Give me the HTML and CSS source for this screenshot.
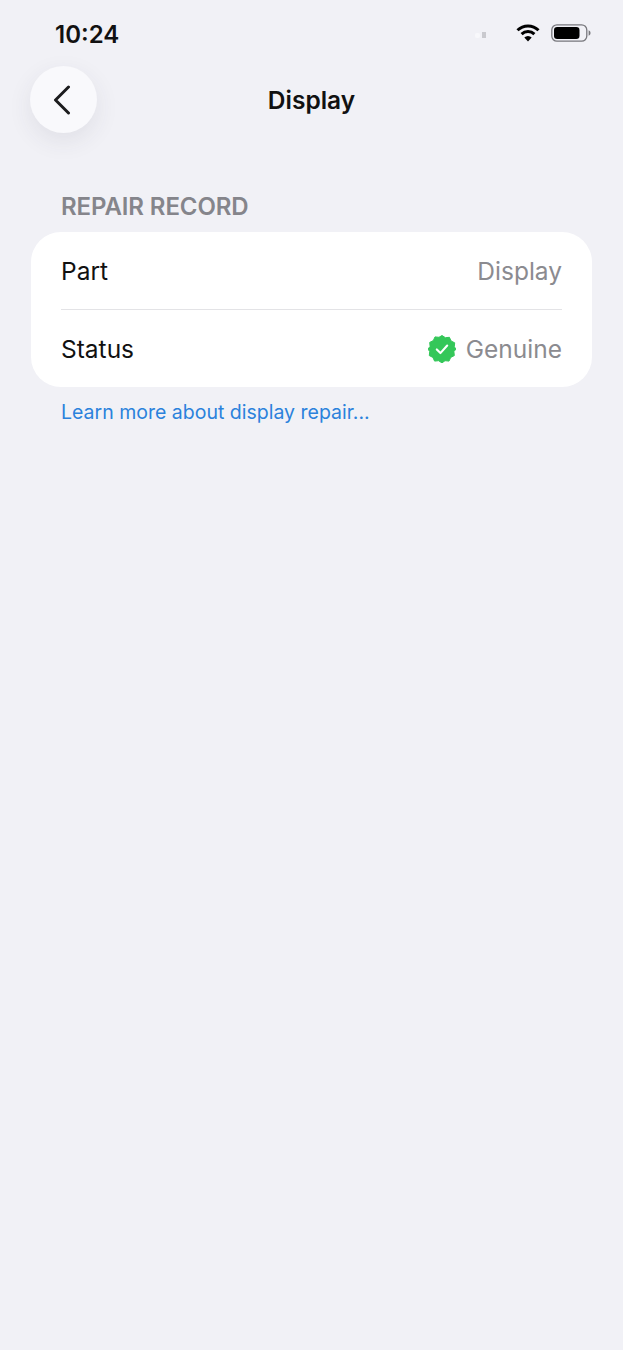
FILE: index.html
```html
<!DOCTYPE html>
<html lang="en">
<head>
<meta charset="utf-8">
<title>Display</title>
<link rel="stylesheet" href="styles.css">
</head>
<body>
<div class="screen">
  <header class="status">
    <span class="time">10:24</span>
    <div class="status-icons">
      <span class="cell-dots"><i class="dot-a"></i><i class="dot-b"></i></span>
      <svg class="wifi" width="24" height="18" viewBox="0 0 24 18"><path d="M1.5 6.2A15 15 0 0 1 22.5 6.2" fill="none" stroke="#000" stroke-width="3"/><path d="M5.6 10.2A9.2 9.2 0 0 1 18.4 10.2" fill="none" stroke="#000" stroke-width="3"/><path d="M12 17.6 8.3 13.6a5.2 5.2 0 0 1 7.4 0Z" fill="#000"/></svg>
      <svg class="battery" width="40" height="18" viewBox="0 0 40 18"><rect x="0.8" y="0.8" width="35" height="16.4" rx="5.2" fill="none" stroke="#77777c" stroke-width="1.3"/><rect x="3" y="3" width="25.5" height="12" rx="3.2" fill="#000"/><path d="M37.6 6.2c1.2.4 1.9 1.5 1.9 2.8s-.7 2.4-1.9 2.8Z" fill="#77777c"/></svg>
    </div>
  </header>
  <nav class="nav">
    <button class="back" aria-label="Back">
      <svg width="20" height="30" viewBox="0 0 20 30"><path d="M16.5 2 3.5 15l13 13" fill="none" stroke="#1c1c1e" stroke-width="3" stroke-linecap="round" stroke-linejoin="round"/></svg>
    </button>
    <h1 class="title">Display</h1>
    <span class="nav-spacer"></span>
  </nav>
  <main class="content">
    <h2 class="section-label">REPAIR RECORD</h2>
    <section class="card">
      <div class="row row-first">
        <span class="row-label">Part</span>
        <span class="row-value">Display</span>
      </div>
      <div class="row">
        <span class="row-label">Status</span>
        <span class="row-value row-status">
          <svg width="28" height="28" viewBox="0 0 28 28"><path d="M14 .5l3.4 2.2 4-.4 1.7 3.7 3.6 1.8-.4 4L28 14l-2.1 2.6.4 4-3.6 1.8-1.7 3.7-4-.4L14 27.9l-3.4-2.2-4 .4-1.7-3.7-3.6-1.8.4-4L0 14l2.1-2.6-.4-4 3.6-1.8 1.7-3.7 4 .4Z" fill="#34c759" stroke="#34c759" stroke-width="1" stroke-linejoin="round"/><path d="M8.8 14.4l3.6 3.7 6.8-7.6" fill="none" stroke="#fff" stroke-width="2.1" stroke-linecap="round" stroke-linejoin="round"/></svg>
          Genuine
        </span>
      </div>
    </section>
    <a class="learn" href="#">Learn more about display repair...</a>
  </main>
</div>
</body>
</html>
```
FILE: styles.css
```css
* { box-sizing: border-box; }
html, body { margin: 0; padding: 0; }
body {
  background: #f1f1f6;
  font-family: Inter, "Liberation Sans", sans-serif;
  color: #000;
}
.screen {
  width: 623px;
  height: 1350px;
  overflow: hidden;
  display: flex;
  flex-direction: column;
}
.status {
  height: 66px;
  padding: 0 32px 0 55px;
  display: flex;
  align-items: center;
  justify-content: space-between;
}
.time {
  font-size: 24px;
  font-weight: 600;
  color: #111;
  position: relative;
  top: 1px;
}
.status-icons {
  display: flex;
  align-items: center;
  gap: 11px;
}
.cell-dots {
  display: flex;
  align-items: flex-end;
  gap: 2px;
  height: 10px;
  margin-right: 19px;
}
.dot-a { width: 5px; height: 5px; background: #f8f8fb; border-radius: 2px; }
.dot-b { width: 4px; height: 6px; background: #c9c9ce; }
.wifi { display: block; }
.battery { display: block; }
.nav {
  height: 67px;
  padding: 0 30px;
  display: grid;
  grid-template-columns: 1fr auto 1fr;
  align-items: center;
}
.back {
  width: 67px;
  height: 67px;
  border: 0;
  padding: 0 4px 0 0;
  border-radius: 50%;
  background: #f9f9fc;
  box-shadow: 0 8px 24px rgba(60, 60, 80, 0.09);
  display: flex;
  align-items: center;
  justify-content: center;
}
.title {
  margin: 0;
  font-size: 24.5px;
  font-weight: 600;
  color: #111;
}
.content {
  padding: 59px 31px 0;
  display: flex;
  flex-direction: column;
}
.section-label {
  margin: 0 0 10px 30px;
  font-size: 24px;
  line-height: 30px;
  font-weight: 600;
  color: #85858b;
  letter-spacing: -0.1px;
}
.card {
  background: #fff;
  border-radius: 30px;
  padding: 0 30px;
  height: 155px;
  display: flex;
  flex-direction: column;
}
.row {
  flex: 1;
  display: flex;
  align-items: center;
  justify-content: space-between;
}
.row-first { border-bottom: 1px solid #e3e3e6; padding-bottom: 0; }
.row-label {
  font-size: 24.5px;
  color: #111;
}
.row-value {
  font-size: 24.5px;
  color: #8b8b90;
}
.row-status {
  display: flex;
  align-items: center;
  gap: 10px;
}
.learn {
  margin: 13px 0 0 30px;
  font-size: 19.5px;
  line-height: 24px;
  color: #2b82dc;
  text-decoration: none;
}
```
